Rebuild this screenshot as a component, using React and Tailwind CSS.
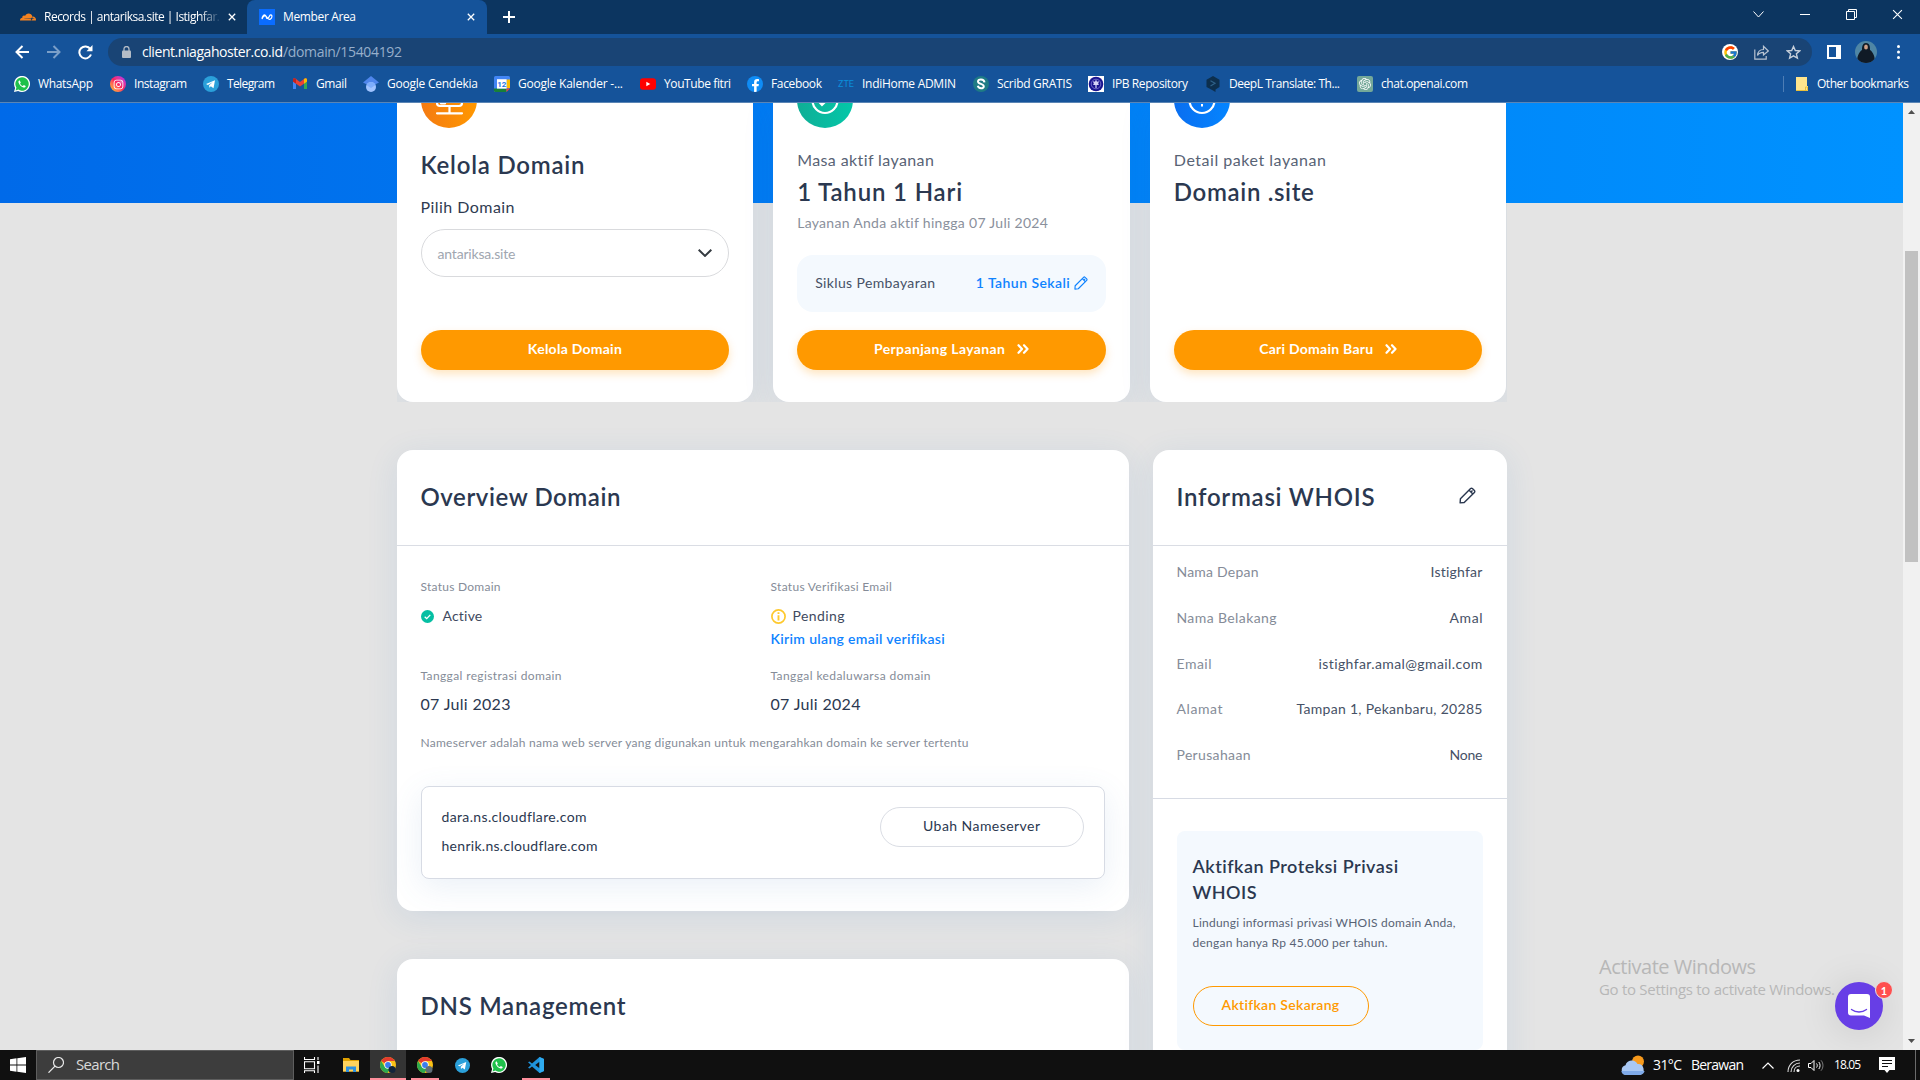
import React, { useLayoutEffect, useRef, useState } from "react";
import { FcGoogle } from "react-icons/fc";
import { FaInstagram, FaFacebookF } from "react-icons/fa";
import { SiCloudflare, SiOpenai } from "react-icons/si";

/* One line of text whose tracking is adjusted so that it fills the width w. */
function T({ w, className = "", children }) {
  const ref = useRef(null);
  const [ls, setLs] = useState(0);
  useLayoutEffect(() => {
    const n = String(children).length;
    const natural = ref.current.getBoundingClientRect().width - ls * n;
    setLs((w - natural) / Math.max(1, n - 1));
  }, [w, children]);
  return (
    <div className={"whitespace-pre " + className} style={{ width: w }}>
      <span ref={ref} style={{ letterSpacing: ls + "px" }}>
        {children}
      </span>
    </div>
  );
}

function XIcon({ className, sw = 1.6 }) {
  return (
    <svg className={className} viewBox="0 0 10 10" fill="none" stroke="currentColor" strokeWidth={sw}>
      <path d="M1 1l8 8M9 1L1 9" />
    </svg>
  );
}

function Pencil({ className }) {
  return (
    <svg className={className} viewBox="0 0 18 18" fill="none" stroke="currentColor" strokeWidth="1.5" strokeLinejoin="round">
      <path d="M1.2 16.8l.3-4.3L12.3 1.7c.6-.6 1.3-.6 1.9 0l2.1 2.1c.6.6.6 1.3 0 1.9L5.5 16.4z" />
      <path d="M10.7 3.4l4 4M12.7 5.3l1.6-1.6" />
    </svg>
  );
}

function TelegramIcon({ className }) {
  return (
    <svg className={className} viewBox="0 0 16 16">
      <circle cx="8" cy="8" r="8" fill="#2ba0da" />
      <path d="M3 7.9l9-3.6-1.5 8-2.7-2-1.4 1.4-.3-2.4 3.8-3.4-5 3z" fill="#fff" />
    </svg>
  );
}

function WhatsIcon({ className }) {
  return (
    <svg className={className} viewBox="0 0 16 16">
      <path d="M0 16l1.1-4.1A8 8 0 1 1 4.100 14.900z" fill="#fff" />
      <path d="M1.600 14.400l.8-2.800A6.700 6.700 0 1 1 4.400 13.600z" fill="#1fc14b" />
      <path d="M5.500 4.200c-1 .4-1.300 1.500-.9 2.500.8 2.200 2.500 4 4.800 4.800 1.200.4 2.200-.2 2.300-1.500l-1.900-.9-.9 1c-1.200-.5-2.200-1.400-2.800-2.700l.7-.9z" fill="#fff" />
    </svg>
  );
}

const ICONS = {
  whatsapp: <WhatsIcon className="size-4" />,
  instagram: (
    <div className="flex size-4 items-center justify-center rounded-full bg-linear-to-tr from-[#ffc400] via-[#fb1e5c] to-[#b400ff] text-white">
      <FaInstagram size={11} />
    </div>
  ),
  telegram: <TelegramIcon className="size-4" />,
  gmail: (
    <svg className="size-4" viewBox="0 0 16 16">
      <path d="M1 3.500V13h3V6z" fill="#4285f4" />
      <path d="M15 3.500V13h-3V6z" fill="#34a853" />
      <path d="M1 3v2.600l7 5 7-5V3.200C14.500 2 13 2 12 3L8 6 4 3C3 2 1.300 2 1 3z" fill="#ea4335" />
      <path d="M12 3v4.800l3-2.200V3.300C14.500 2 13 2 12 3z" fill="#fbbc04" />
      <path d="M1 3.300v2.300l3 2.200V3C3 2 1.300 2 1 3.300z" fill="#c5221f" />
    </svg>
  ),
  scholar: (
    <svg className="size-4" viewBox="0 0 16 16">
      <path d="M8 0L0 6.500l4 2h8l4-2z" fill="#4f86ec" />
      <circle cx="8" cy="11" r="5" fill="#a0c3ff" />
      <path d="M3.400 9a5 5 0 0 1 9.200 0L8 12z" fill="#76a7fa" opacity=".8" />
    </svg>
  ),
  calendar: (
    <svg className="size-4" viewBox="0 0 16 16">
      <path d="M0 1.500Q0 0 1.500 0h13Q16 0 16 1.500V12l-4 4H1.500Q0 16 0 14.500z" fill="#4285f4" />
      <path d="M12.500 3.500H16V12h-3.500z" fill="#fbbc04" />
      <path d="M0 12.500h12.500V16h-11Q0 16 0 14.500z" fill="#188038" />
      <path d="M12.500 12.500H16L12.500 16z" fill="#ea4335" />
      <rect x="3" y="3.200" width="9.600" height="9.400" fill="#fff" />
      <text x="7.800" y="10.900" fontSize="8" fontWeight="700" textAnchor="middle" fill="#1a73e8" fontFamily="Roboto, sans-serif">12</text>
    </svg>
  ),
  youtube: (
    <svg className="size-4" viewBox="0 0 16 16">
      <rect x="0" y="2.300" width="16" height="11.400" rx="3" fill="#f00" />
      <path d="M6.300 5.700v4.600l4-2.300z" fill="#fff" />
    </svg>
  ),
  facebook: (
    <div className="flex size-4 items-end justify-center overflow-hidden rounded-full bg-[#0f8cf5] text-white">
      <FaFacebookF size={13} />
    </div>
  ),
  zte: <T w={16} className="font-[Roboto,sans-serif] text-[9px] leading-4 text-[#0b8fdc]">ZTE</T>,
  scribd: (
    <svg className="size-4" viewBox="0 0 16 16">
      <circle cx="8" cy="8" r="8" fill="#1e7b85" />
      <path d="M11.500 6.300C11 2.700 5 2.500 5 5.500c0 2.800 5.800 2 5.800 4.900 0 2.700-5.300 2.600-6-.6" fill="none" stroke="#fff" strokeWidth="2" />
    </svg>
  ),
  ipb: (
    <svg className="size-4" viewBox="0 0 16 16">
      <rect width="16" height="16" fill="#fff" />
      <circle cx="8" cy="8" r="7.300" fill="#1a148f" />
      <circle cx="8" cy="8" r="4.800" fill="none" stroke="#7f7bd0" strokeWidth=".8" />
      <path d="M8 3.500l1 2.300 2-.6-.8 2.500.8 1.300H8.600V12H7.400V9H5l.8-1.300L5 5.200l2 .6z" fill="#d6d4f5" />
    </svg>
  ),
  deepl: (
    <svg className="size-4" viewBox="0 0 16 16">
      <path d="M8 0l6.500 3.700V11L10.500 13.500V16L8 14.500 1.500 11V3.700z" fill="#0d2f4d" />
      <path d="M5.500 4.800l4.500 2.500-4.500 2.700" stroke="#2f6188" fill="none" strokeWidth="1.200" />
    </svg>
  ),
  openai: (
    <div className="flex size-4 items-center justify-center rounded-[2px] bg-[#74a899] text-white">
      <SiOpenai size={12} />
    </div>
  ),
};

const BOOKMARKS = [
  ["whatsapp", "WhatsApp", 55, "w-[96px]"],
  ["instagram", "Instagram", 53, "w-[93px]"],
  ["telegram", "Telegram", 48, "w-[89px]"],
  ["gmail", "Gmail", 31, "w-[71px]"],
  ["scholar", "Google Cendekia", 91, "w-[131px]"],
  ["calendar", "Google Kalender -...", 105, "w-[146px]"],
  ["youtube", "YouTube fitri", 67, "w-[107px]"],
  ["facebook", "Facebook", 51, "w-[91px]"],
  ["zte", "IndiHome ADMIN", 94, "w-[135px]"],
  ["scribd", "Scribd GRATIS", 75, "w-[115px]"],
  ["ipb", "IPB Repository", 76, "w-[117px]"],
  ["deepl", "DeepL Translate: Th...", 111, "w-[152px]"],
  ["openai", "chat.openai.com", 87, "w-[111px]"],
];

function Browser() {
  return (
    <header className="h-[103px] border-b border-[#5a85b5] bg-[#15539a] font-['Open_Sans',sans-serif] text-xs text-white">
      <div className="flex h-[34px] bg-[#0c3560]">
        <div className="flex w-[247px] items-center pl-5">
          <SiCloudflare size={16} color="#f5821f" />
          <div className="ml-2 w-[177px] mask-r-from-88%">
            <T w={176} className="leading-4">Records | antariksa.site | Istighfar.</T>
          </div>
          <XIcon className="ml-[7px] size-2" />
        </div>
        <div className="flex w-[240px] items-center rounded-t-lg bg-[#15539a] pl-3">
          <svg className="size-4" viewBox="0 0 16 16">
            <rect width="16" height="16" fill="#0a6cff" />
            <path d="M3 10c0-3 2-5 3.500-3.500S7 10.500 9 9s1.500-3.500 3-3.200 1.200 3.400-.7 4.300-2.800-.6-3.800-2.400S4 6.800 3 10z" fill="none" stroke="#fff" strokeWidth="1.200" />
          </svg>
          <T w={73} className="ml-2 leading-4">Member Area</T>
          <XIcon className="ml-[111px] size-2" />
        </div>
        <svg className="mt-[11px] ml-4 size-3" viewBox="0 0 12 12" stroke="#fff" strokeWidth="2">
          <path d="M6 0v12M0 6h12" />
        </svg>
        <div className="ml-auto flex h-7 items-center pr-[17px]">
          <svg className="mr-9 h-[7px] w-[11px]" viewBox="0 0 11 7" fill="none" stroke="#fff"><path d="M.5.500l5 5.500 5-5.500" /></svg>
          <div className="mr-9 h-px w-[10px] bg-white" />
          <svg className="mr-[35px] size-[11px]" viewBox="0 0 11 11" fill="none" stroke="#fff"><path d="M.5 2.500h8v8h-8zM2.500 2.500v-2h8v8h-2" /></svg>
          <XIcon className="size-[11px]" sw={1} />
        </div>
      </div>
      <div className="flex h-8 items-center pt-1">
        <svg className="ml-[15px] h-[14px] w-[14px]" viewBox="0 0 14 14" fill="none" stroke="#fff" strokeWidth="2"><path d="M14 7H1.500M7.500 1l-6 6 6 6" /></svg>
        <svg className="ml-[18px] h-[14px] w-[14px]" viewBox="0 0 14 14" fill="none" stroke="#7b9fc8" strokeWidth="2"><path d="M0 7h12.500M6.500 1l6 6-6 6" /></svg>
        <svg className="ml-[17px] size-[15px]" viewBox="0 0 15 15" fill="none" stroke="#fff" strokeWidth="2"><path d="M13 9.500A6 6 0 1 1 12.300 4" /><path d="M14.500 0v6.300H8.500z" fill="#fff" stroke="none" /></svg>
        <div className="ml-[15px] flex h-7 w-[1704px] items-center rounded-full bg-[#194475] pl-[14px] text-sm">
          <svg className="h-3 w-[9px]" viewBox="0 0 9 12"><rect y="4.500" width="9" height="7.500" rx="1" fill="#b4bcc6" /><path d="M2 5V3a2.500 2.500 0 0 1 5 0v2" fill="none" stroke="#b4bcc6" strokeWidth="1.300" /></svg>
          <T w={141} className="ml-[11px]">client.niagahoster.co.id</T>
          <T w={119} className="text-[#97afcb]">/domain/15404192</T>
          <div className="ml-auto flex size-4 items-center justify-center rounded-full bg-white"><FcGoogle size={15} /></div>
          <svg className="ml-4 size-[15px]" viewBox="0 0 15 15" fill="none" stroke="#b9c4d2" strokeWidth="1.200"><path d="M.8 4.500v9.700h11.400V11M3.500 10.500c.3-4 2.500-6 6-6V1.300L14.300 6 9.500 10V7.300c-3 0-4.800 1-6 3.200z" /></svg>
          <svg className="mr-[11px] ml-[17px] size-[15px]" viewBox="0 0 15 15" fill="none" stroke="#c6cfda" strokeWidth="1.400"><path d="M7.500 1.500l1.800 4 4.400.4-3.300 2.900 1 4.300-3.900-2.300-3.900 2.300 1-4.300L1.300 5.900l4.400-.4z" /></svg>
        </div>
        <div className="ml-[15px] h-[14px] w-[14px] border-2 border-r-[5px] border-white" />
        <div className="ml-[14px] size-[22px] overflow-hidden rounded-full bg-[#4f86a5]">
          <svg viewBox="0 0 22 22"><path d="M11 2C7 2 7 7 7 9c-3 2-5 6-5 13h18c0-7-2-11-5-13 0-3 0-7-4-7z" fill="#101a26" /><ellipse cx="11" cy="6" rx="1.900" ry="2.600" fill="#cfa088" /></svg>
        </div>
        <svg className="ml-5 h-[14px] w-[3px]" viewBox="0 0 3 14" fill="#fff"><circle cx="1.500" cy="1.500" r="1.500" /><circle cx="1.500" cy="7" r="1.500" /><circle cx="1.500" cy="12.500" r="1.500" /></svg>
      </div>
      <div className="flex h-9 items-center pl-[14px]">
        {BOOKMARKS.map(([icon, label, w, box]) => (
          <div key={label} className={"flex shrink-0 items-center gap-2 " + box}>
            {ICONS[icon]}
            <T w={w} className="leading-4">{label}</T>
          </div>
        ))}
        <div className="ml-auto flex items-center pr-[11px]">
          <div className="mr-3 h-4 w-px bg-[#4d7db5]" />
          <svg className="mr-[9px] h-[14px] w-3" viewBox="0 0 12 14"><path d="M0 0h11v9h1v5H0z" fill="#ffe58d" /><path d="M0 13.500h11.500V10H9.500v3.500" fill="none" stroke="#e9bf3b" /></svg>
          <T w={92} className="leading-4">Other bookmarks</T>
        </div>
      </div>
    </header>
  );
}

function OrangeButton({ label, w, arrows }) {
  return (
    <button className="mt-auto flex h-10 w-full shrink-0 items-center justify-center gap-3 rounded-full bg-[#ff9900] pb-0.5 text-sm font-bold text-white shadow-[0_4px_8px_rgba(255,153,0,0.25)]">
      <T w={w}>{label}</T>
      {arrows && (
        <svg className="h-[10px] w-3" viewBox="0 0 12 10" fill="none" stroke="#fff" strokeWidth="2.200" strokeLinecap="round" strokeLinejoin="round"><path d="M1.500 1.200L5 5 1.500 8.800M7 1.200L10.500 5 7 8.800" /></svg>
      )}
    </button>
  );
}

const CARD = "bg-white shadow-[0_6px_32px_rgba(50,115,200,0.11)]";
const TITLE = "text-2xl leading-[30px] font-semibold text-[#2b3850]";

function TopCards() {
  const card = "flex h-[299px] flex-col rounded-b-2xl px-6 pb-8 overflow-hidden " + CARD;
  return (
    <div className="grid grid-cols-3 gap-5 overflow-hidden">
      <div className={card}>
        <svg className="-mt-[31px] size-14 shrink-0" viewBox="0 0 56 56">
          <defs><linearGradient id="og"><stop stopColor="#f47a12" /><stop offset="1" stopColor="#ff9800" /></linearGradient></defs>
          <circle cx="28" cy="28" r="28" fill="url(#og)" />
          <g fill="none" stroke="#fff" strokeWidth="2.200" strokeLinecap="round"><rect x="16" y="14" width="25" height="20" rx="3" /><path d="M20 31.500h4M28.500 34v7M16 41.300h25" /></g>
        </svg>
        <T w={164} className={"mt-[22px] " + TITLE}>Kelola Domain</T>
        <T w={94} className="mt-[15px] text-base leading-6 text-[#2f3b51]">Pilih Domain</T>
        <div className="mt-[10px] flex h-12 items-center justify-between rounded-full border border-[#d9dadd] pr-4 pl-4">
          <T w={78} className="mt-0.5 text-sm text-[#a0a6b0]">antariksa.site</T>
          <svg className="h-2 w-[14px]" viewBox="0 0 14 8" fill="none" stroke="#343a40" strokeWidth="2"><path d="M.7.700l6.300 6.200L13.300.700" /></svg>
        </div>
        <OrangeButton label="Kelola Domain" w={94} />
      </div>
      <div className={card}>
        <svg className="-mt-[31px] size-14 shrink-0" viewBox="0 0 56 56">
          <defs><linearGradient id="gg"><stop stopColor="#0fae96" /><stop offset="1" stopColor="#04c7a9" /></linearGradient></defs>
          <circle cx="28" cy="28" r="28" fill="url(#gg)" />
          <g fill="none" stroke="#fff" strokeWidth="2.200"><circle cx="28" cy="28.500" r="12.500" /><path d="M20.500 28l4.500 5 9-9" /></g>
        </svg>
        <T w={137} className="mt-5 text-base leading-6 text-[#586375]">Masa aktif layanan</T>
        <T w={165} className={"mt-[5px] " + TITLE}>1 Tahun 1 Hari</T>
        <T w={251} className="mt-1.5 text-sm leading-5 text-[#8a909c]">Layanan Anda aktif hingga 07 Juli 2024</T>
        <div className="mt-[22px] flex h-[57px] shrink-0 items-center rounded-2xl bg-[#f4f9fe] pr-[18px] pb-0.5 pl-[18px] text-sm">
          <T w={120} className="text-[#465166]">Siklus Pembayaran</T>
          <T w={94} className="ml-auto font-semibold text-[#0f83ff]">1 Tahun Sekali</T>
          <Pencil className="ml-1 size-[14px] text-[#0f83ff]" />
        </div>
        <OrangeButton label="Perpanjang Layanan" w={131} arrows />
      </div>
      <div className={card}>
        <svg className="-mt-[31px] size-14 shrink-0" viewBox="0 0 56 56">
          <defs><linearGradient id="bg"><stop stopColor="#0a6ef0" /><stop offset="1" stopColor="#0485ff" /></linearGradient></defs>
          <circle cx="28" cy="28" r="28" fill="url(#bg)" />
          <circle cx="28" cy="28.500" r="12.500" fill="none" stroke="#fff" strokeWidth="2.200" />
          <path d="M28 22v7M28 32v2.500" stroke="#fff" strokeWidth="2" />
        </svg>
        <T w={152} className="mt-5 text-base leading-6 text-[#586375]">Detail paket layanan</T>
        <T w={140} className={"mt-[5px] " + TITLE}>Domain .site</T>
        <OrangeButton label="Cari Domain Baru" w={114} arrows />
      </div>
    </div>
  );
}

const LABEL = "text-xs leading-5 text-[#858c98]";

function Overview() {
  return (
    <section className={"h-[461px] rounded-2xl " + CARD}>
      <div className="flex h-24 items-center border-b border-[#dadde4] px-6 pb-0.5">
        <T w={200} className={TITLE}>Overview Domain</T>
      </div>
      <div className="px-6 pt-[31px]">
        <div className="grid grid-cols-[350px_1fr]">
          <div className="h-[89px]">
            <T w={80} className={LABEL}>Status Domain</T>
            <div className="mt-[9px] flex h-5 items-center gap-[9px]">
              <svg className="size-[13px]" viewBox="0 0 13 13"><circle cx="6.500" cy="6.500" r="6.500" fill="#05bfa3" /><path d="M3.700 6.800l2 1.900 3.600-3.800" fill="none" stroke="#fff" strokeWidth="1.300" /></svg>
              <T w={40} className="text-sm text-[#3f4a60]">Active</T>
            </div>
          </div>
          <div>
            <T w={121} className={LABEL}>Status Verifikasi Email</T>
            <div className="mt-[9px] flex h-5 items-center gap-[7px]">
              <svg className="size-[15px]" viewBox="0 0 15 15"><circle cx="7.500" cy="7.500" r="6.600" fill="none" stroke="#fec92e" strokeWidth="1.700" /><path d="M7.500 3.300v1.800M7.500 6.200v5.300" stroke="#fec92e" strokeWidth="1.900" /></svg>
              <T w={52} className="text-sm text-[#3f4a60]">Pending</T>
            </div>
            <T w={174} className="mt-[3px] text-sm leading-5 font-semibold text-[#0f83ff]">Kirim ulang email verifikasi</T>
          </div>
          <div>
            <T w={141} className={LABEL}>Tanggal registrasi domain</T>
            <T w={90} className="mt-2 text-base leading-5 text-[#2b3850]">07 Juli 2023</T>
          </div>
          <div>
            <T w={160} className={LABEL}>Tanggal kedaluwarsa domain</T>
            <T w={90} className="mt-2 text-base leading-5 text-[#2b3850]">07 Juli 2024</T>
          </div>
        </div>
        <T w={548} className={"mt-[19px] " + LABEL}>Nameserver adalah nama web server yang digunakan untuk mengarahkan domain ke server tertentu</T>
        <div className="mt-[33px] flex h-[93px] justify-between rounded-lg border border-[#d7dbe4] bg-white py-5 pr-5 pl-5 text-sm text-[#2b3850] shadow-[0_8px_32px_rgba(80,130,190,0.12)]">
          <div>
            <T w={145} className="leading-5">dara.ns.cloudflare.com</T>
            <T w={156} className="mt-[9px] leading-5">henrik.ns.cloudflare.com</T>
          </div>
          <button className="flex h-10 w-[204px] items-center justify-center rounded-full border border-[#dadde4] pb-0.5">
            <T w={117}>Ubah Nameserver</T>
          </button>
        </div>
      </div>
    </section>
  );
}

const WHOIS = [
  ["Nama Depan", 82, "Istighfar", 52],
  ["Nama Belakang", 100, "Amal", 33],
  ["Email", 35, "istighfar.amal@gmail.com", 164],
  ["Alamat", 46, "Tampan 1, Pekanbaru, 20285", 186],
  ["Perusahaan", 74, "None", 33],
];

function Whois() {
  return (
    <section className={"h-[640px] rounded-t-2xl " + CARD}>
      <div className="flex h-24 items-center justify-between border-b border-[#dadde4] pr-[31px] pb-0.5 pl-6">
        <T w={198} className={TITLE}>Informasi WHOIS</T>
        <Pencil className="mb-0.5 size-[17px] text-[#2b3850]" />
      </div>
      <div className="flex h-[253px] flex-col gap-[25.800px] border-b border-[#d7dbe4] px-6 pt-4 text-sm leading-5">
        {WHOIS.map(([k, kw, v, vw]) => (
          <div key={k} className="flex justify-between">
            <T w={kw} className="text-[#858c98]">{k}</T>
            <T w={vw} className="text-[#465166]">{v}</T>
          </div>
        ))}
      </div>
      <div className="mx-6 mt-8 h-[219px] rounded-lg bg-[#f4f9fe] px-4 pt-[22px]">
        <T w={206} className="text-lg leading-[26px] font-semibold text-[#2b3850]">Aktifkan Proteksi Privasi</T>
        <T w={64} className="text-lg leading-[26px] font-semibold text-[#2b3850]">WHOIS</T>
        <T w={263} className="mt-2 text-xs leading-5 text-[#586375]">Lindungi informasi privasi WHOIS domain Anda,</T>
        <T w={195} className="text-xs leading-5 text-[#586375]">dengan hanya Rp 45.000 per tahun.</T>
        <button className="mt-[33px] flex h-10 w-44 items-center justify-center rounded-full border border-[#ff9900] pb-0.5 text-sm font-semibold text-[#ff9900]">
          <T w={118}>Aktifkan Sekarang</T>
        </button>
      </div>
    </section>
  );
}

function Chrome({ dot }) {
  return (
    <svg className="size-4" viewBox="0 0 16 16">
      <circle cx="8" cy="8" r="8" fill="#fbc116" />
      <path d="M8 8L1.100 4A8 8 0 0 1 14.900 4H8z" fill="#e33b2e" />
      <path d="M1.100 4A8 8 0 0 0 7.500 16L11 10 8 8 4.500 9.500z" fill="#2da94f" />
      <circle cx="8" cy="8" r="3.700" fill="#fff" />
      <circle cx="8" cy="8" r="2.900" fill="#3b7ded" />
      <circle cx="12" cy="12.500" r="3.500" fill={dot} />
    </svg>
  );
}

function Taskbar() {
  const slot = "flex h-[30px] items-center justify-center";
  return (
    <footer className="flex h-[30px] items-center bg-[#101010] font-['Open_Sans',sans-serif] text-sm text-white">
      <svg className="ml-[10px] size-4" viewBox="0 0 16 16" fill="#fff"><path d="M0 2.200l6.500-.9v6.300H0zM7.300 1.200L16 0v7.600H7.300zM0 8.400h6.500v6.300L0 13.800zM7.300 8.400H16V16l-8.700-1.200z" /></svg>
      <div className="ml-[10px] flex h-[30px] w-[258px] items-center border border-[#5e5e5e] bg-[#3d3d3d] pl-[11px]">
        <svg className="size-4" viewBox="0 0 16 16" fill="none" stroke="#e8e8e8" strokeWidth="1.200"><circle cx="10.500" cy="5.500" r="5" /><path d="M7 9.200L.5 15.700" /></svg>
        <T w={44} className="ml-3 text-[15px] text-[#d9d9d9]">Search</T>
      </div>
      <svg className="ml-[10px] size-4" viewBox="0 0 16 16" fill="none" stroke="#fff" strokeWidth="1.100"><path d="M.5 0v2.500h10V0M.5 4.700h10v7H.5zM.5 16v-2.300h10V16M14 0v3M14 8.500V16" /><path d="M13 5.500h2.500" strokeWidth="3" /></svg>
      <svg className="ml-[23px] size-4" viewBox="0 0 16 16"><path d="M0 1h6l1.500 2H16v11.500H0z" fill="#e0a100" /><path d="M0 4h16v10.500H0z" fill="#ffd35c" /><path d="M3 15V9.500h10V15h-3v-2.500H6V15z" fill="#2e91e0" /></svg>
      <div className={slot + " ml-[11px] w-9 border-b-2 border-[#ff8f9c] bg-[#343434] pt-0.5"}><Chrome dot="#13253b" /></div>
      <div className={slot + " ml-[5px] w-7 border-b-2 border-[#ff8f9c] pt-0.5"}><Chrome dot="#5f6d76" /></div>
      <TelegramIcon className="ml-4 size-[15px]" />
      <WhatsIcon className="ml-[21px] size-4" />
      <div className={slot + " ml-[15px] w-7 border-b-2 border-[#ff8f9c] pt-0.5"}>
        <svg className="size-4" viewBox="0 0 16 16"><path d="M11.500 0L16 2v12l-4.500 2L4 9.500 1.500 11.500 0 10.700 3 8 0 5.300l1.500-.8L4 6.500zM11.500 4.800L7.200 8l4.300 3.200z" fill="#1f93dc" /><path d="M11.500 0L16 2v12l-4.500 2z" fill="#2fabf0" /></svg>
      </div>
      <div className="ml-auto flex h-[30px] items-center">
        <svg className="h-5 w-6" viewBox="0 0 24 20"><circle cx="17" cy="6.500" r="6" fill="#f79a1c" /><path d="M5 20a5 5 0 0 1-.5-9.800A6.500 6.500 0 0 1 16.500 9 5.700 5.700 0 0 1 19 20z" fill="#a9c8f3" /><path d="M5 20a5 5 0 0 1-4.700-4h23.300A5.500 5.500 0 0 1 19 20z" fill="#7faae8" /></svg>
        <T w={29} className="ml-2">31°C</T>
        <T w={53} className="ml-[9px]">Berawan</T>
        <svg className="ml-[18px] h-[7px] w-3" viewBox="0 0 12 7" fill="none" stroke="#fff" strokeWidth="1.200"><path d="M.5 6.500L6 1l5.500 5.500" /></svg>
        <svg className="ml-[13px] size-[13px]" viewBox="0 0 13 13" fill="none" stroke="#fff" strokeWidth="1.100"><path d="M1 13C1 6 6 1 13 1M4 13c0-5 4-9 9-9M7 13c0-3.500 2.500-6 6-6" opacity=".85" /><circle cx="11" cy="11.500" r="1.500" fill="#fff" stroke="none" /></svg>
        <svg className="ml-2 h-[13px] w-4" viewBox="0 0 16 13" fill="none" stroke="#fff"><path d="M.5 4.500h2.500l3-3v10l-3-3H.5zM8.500 4.500c1 1.200 1 2.800 0 4M10.800 3c1.700 2 1.700 5 0 7" /><path d="M13 1.300c2.600 3 2.600 7.400 0 10.400" opacity=".45" /></svg>
        <T w={27} className="ml-[10px] text-xs">18.05</T>
        <svg className="ml-[18px] h-4 w-4" viewBox="0 0 16 16"><path d="M0 0h16v13h-5.500L8 16l-2.500-3H0z" fill="#fff" /><path d="M3 3.500h10M3 6.500h10M3 9.500h6" stroke="#101010" /></svg>
        <div className="mr-1 ml-5 h-[30px] w-px bg-[#6b6b6b]" />
      </div>
    </footer>
  );
}

export default function App() {
  return (
    <div className="h-[1080px] w-[1920px] overflow-hidden">
      <Browser />
      <div className="flex h-[947px] font-['Lato','Noto_Sans',sans-serif]">
        <main className="relative w-[1903px] overflow-hidden bg-[#e4e4e4]">
          <div className="h-[100px] bg-linear-to-r from-[#006ae9] to-[#0092ff]" />
          <div className="mx-auto -mt-[100px] w-[1110px]">
            <div className="relative"><TopCards /></div>
            <div className="mt-12 grid grid-cols-[732px_354px] items-start justify-between">
              <div className="flex flex-col gap-12">
                <Overview />
                <section className={"flex h-[140px] items-start rounded-t-2xl px-6 pt-8 " + CARD}>
                  <T w={205} className={TITLE}>DNS Management</T>
                </section>
              </div>
              <Whois />
            </div>
          </div>
          <div className="absolute top-[851px] left-[1599px] font-['Open_Sans',sans-serif] text-[#b7b7b7]">
            <T w={157} className="text-xl leading-[26px]">Activate Windows</T>
            <T w={236} className="-mt-px text-[15px] leading-5">Go to Settings to activate Windows.</T>
          </div>
          <div className="absolute top-[879px] left-[1835px] flex size-12 items-center justify-center rounded-full bg-[#673ee6] shadow-[0_2px_40px_rgba(0,0,0,0.12)]">
            <svg className="h-6 w-[22px]" viewBox="0 0 22 24"><path d="M3 0h16a3 3 0 0 1 3 3v21l-6-2.500H3a3 3 0 0 1-3-3V3a3 3 0 0 1 3-3z" fill="#fff" /><path d="M3.500 15.500c4.500 3.400 10.500 3.400 15 0" fill="none" stroke="#673ee6" strokeWidth="1.400" strokeLinecap="round" /></svg>
            <div className="absolute -top-px left-10 flex size-[18px] items-center justify-center rounded-full border border-[#e4e4e4] bg-[#ff4f4f] text-[11px] leading-none font-bold text-white">1</div>
          </div>
        </main>
        <div className="flex w-[17px] flex-col items-center justify-between bg-[#f1f1f1] py-[7px]">
          <svg className="h-1 w-[7px]" viewBox="0 0 7 4"><path d="M0 4l3.500-4L7 4z" fill="#505050" /></svg>
          <div className="mb-[341px] h-[311px] w-[13px] bg-[#c1c1c1]" />
          <svg className="h-1 w-[7px]" viewBox="0 0 7 4"><path d="M0 0l3.500 4L7 0z" fill="#505050" /></svg>
        </div>
      </div>
      <Taskbar />
    </div>
  );
}
